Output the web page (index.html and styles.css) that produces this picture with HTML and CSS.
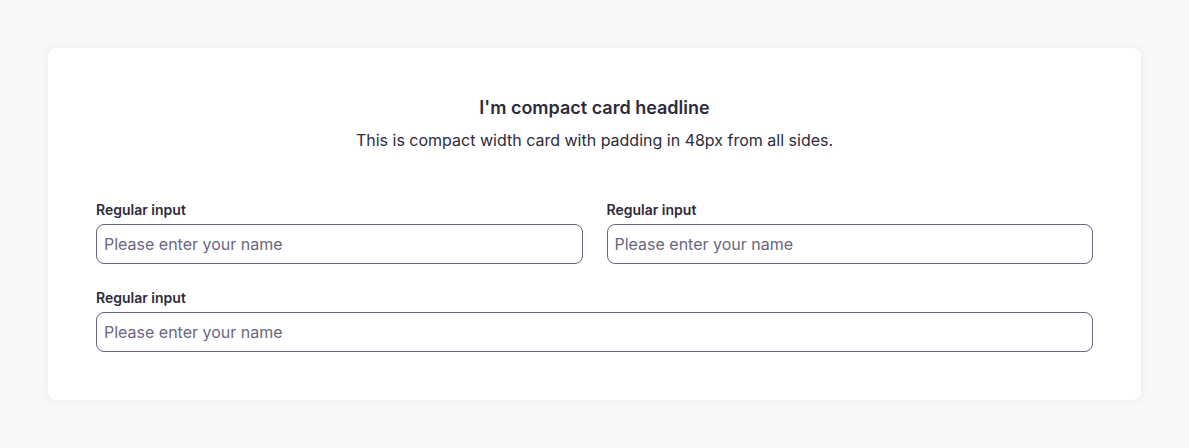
FILE: index.html
```html
<!DOCTYPE html>
<html lang="en">
<head>
<meta charset="utf-8">
<title>Compact card</title>
<link rel="stylesheet" href="styles.css">
</head>
<body>
  <main class="page">
    <section class="card">
      <header class="card-header">
        <h1 class="card-title">I'm compact card headline</h1>
        <p class="card-text">This is compact width card with padding in 48px from all sides.</p>
      </header>
      <form class="form">
        <div class="row row-2">
          <label class="field">
            <span class="field-label">Regular input</span>
            <input class="field-input" type="text" placeholder="Please enter your name">
          </label>
          <label class="field">
            <span class="field-label">Regular input</span>
            <input class="field-input" type="text" placeholder="Please enter your name">
          </label>
        </div>
        <div class="row">
          <label class="field">
            <span class="field-label">Regular input</span>
            <input class="field-input" type="text" placeholder="Please enter your name">
          </label>
        </div>
      </form>
    </section>
  </main>
</body>
</html>
```

FILE: styles.css
```css
* { box-sizing: border-box; }
html, body {
  margin: 0;
  padding: 0;
  background: #f8f8f8;
  font-family: Inter, "Noto Sans", sans-serif;
  color: #2d2b3b;
}
.page {
  padding: 48px;
}
.card {
  background: #ffffff;
  border-radius: 8px;
  box-shadow: 0 0 8px rgba(0, 0, 0, 0.06);
  padding: 48px;
}
.card-header {
  text-align: center;
}
.card-title {
  margin: 0;
  font-size: 18px;
  line-height: 24px;
  font-weight: 600;
  color: #2d2b3b;
}
.card-text {
  margin: 8px 0 0;
  font-size: 16px;
  line-height: 24px;
  font-weight: 400;
  color: #2d2b3b;
}
.form {
  margin-top: 48px;
  display: flex;
  flex-direction: column;
  gap: 24px;
}
.row {
  display: grid;
  grid-template-columns: 1fr;
  gap: 24px;
}
.row-2 {
  grid-template-columns: 1fr 1fr;
}
.field {
  display: flex;
  flex-direction: column;
  gap: 4px;
}
.field-label {
  font-size: 14px;
  line-height: 20px;
  font-weight: 600;
  color: #2d2b3b;
}
.field-input {
  height: 40px;
  border: 1px solid #6b6680;
  border-radius: 8px;
  padding: 0 7px;
  font-family: Inter, "Noto Sans", sans-serif;
  font-size: 16px;
  color: #2d2b3b;
  background: #fff;
  outline: none;
}
.field-input::placeholder {
  color: #6b6680;
  opacity: 1;
}
```
